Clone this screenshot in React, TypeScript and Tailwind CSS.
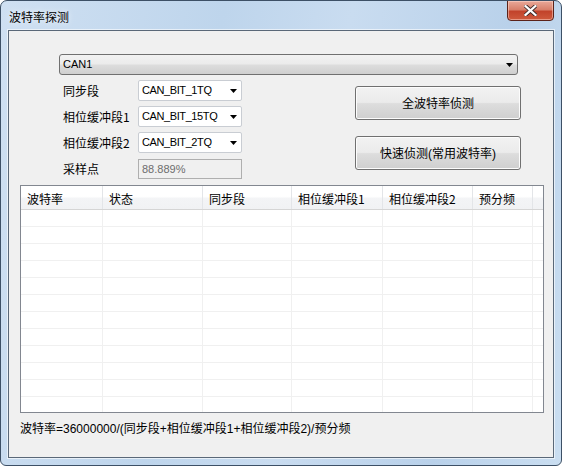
import React from "react";

// Win7 style "波特率探测" dialog
const COLS = [
  { label: "波特率", w: "w-[82px]" },
  { label: "状态", w: "w-[100px]" },
  { label: "同步段", w: "w-[89px]" },
  { label: "相位缓冲段1", w: "w-[91px]" },
  { label: "相位缓冲段2", w: "w-[90px]" },
  { label: "预分频", w: "w-[60px]" },
];

const ROWS = Array.from({ length: 12 }, (_, i) => i);

function Arrow() {
  return (
    <svg width="7" height="4" viewBox="0 0 7 4" className="shrink-0">
      <path d="M0 0 H7 L3.5 4 Z" fill="#000" />
    </svg>
  );
}

function SmallCombo({ value }: { value: string }) {
  return (
    <div className="flex items-center h-[21px] w-[104px] bg-white border border-[#c9cdd3] rounded-[2px] pl-[3px] pr-[4px]">
      <span className="flex-1 text-[11px] tracking-[-0.4px] text-black font-['Liberation_Sans',sans-serif]">{value}</span>
      <Arrow />
    </div>
  );
}

function WinButton({ children }: { children: React.ReactNode }) {
  return (
    <button
      type="button"
      className="h-[34px] w-[166px] rounded-[3px] border border-[#707070] bg-[linear-gradient(to_bottom,#f2f2f2_0%,#ebebeb_48%,#dddddd_52%,#cfcfcf_100%)] shadow-[inset_0_0_0_1px_#fcfcfc] text-[12px] text-black flex items-center justify-center pt-[1px]"
    >
      {children}
    </button>
  );
}

export default function App() {
  return (
    <div className="w-[562px] h-[466px] font-['Liberation_Sans','Noto_Sans_CJK_SC',sans-serif] text-[12px] text-black bg-white">
      <div className="relative flex flex-col w-full h-full rounded-t-[7px] rounded-b-[6px] border border-[#3d5066] bg-[linear-gradient(100deg,#cfe0f2_0%,#bed5ec_35%,#c9dcf0_55%,#b9d1ea_80%,#cadef1_100%)] overflow-hidden">
        {/* title bar */}
        <div className="relative flex items-start h-[29px] shrink-0">
          <span className="ml-[8px] mt-[8px] leading-[16px] text-[12px] text-black font-['Noto_Sans_CJK_SC',sans-serif] [text-shadow:0_0_6px_rgba(255,255,255,0.9)]">
            波特率探测
          </span>
          <div className="ml-auto mr-[7px] mt-[-1px] w-[47px] h-[21px] rounded-b-[4px] border border-[#5b2219] bg-[linear-gradient(to_bottom,#e9a999_0%,#d8806b_45%,#c2432b_55%,#cf5a3d_100%)] shadow-[inset_0_0_0_1px_rgba(255,220,210,0.5)] flex items-center justify-center">
            <svg width="13" height="11" viewBox="0 0 13 11">
              <path
                d="M1.5 1 L11.5 10 M11.5 1 L1.5 10"
                stroke="#3b2a2a"
                strokeWidth="4"
                strokeLinecap="square"
              />
              <path
                d="M1.5 1 L11.5 10 M11.5 1 L1.5 10"
                stroke="#ffffff"
                strokeWidth="2.2"
                strokeLinecap="square"
              />
            </svg>
          </div>
        </div>

        {/* client area */}
        <div className="flex-1 mx-[7px] mb-[7px] border border-[#5a6878] shadow-[0_0_0_1px_rgba(255,255,255,0.6)] bg-[#f0f0f0] flex flex-col">
          {/* CAN combo */}
          <div className="mt-[23px] ml-[50px] w-[459px] h-[21px] rounded-[3px] border border-[#707070] bg-[linear-gradient(to_bottom,#f2f2f2_0%,#ebebeb_48%,#dddddd_52%,#cfcfcf_100%)] flex items-center pl-[3px] pr-[4px]">
            <span className="flex-1 text-[11px] font-['Liberation_Sans',sans-serif]">CAN1</span>
            <Arrow />
          </div>

          <div className="flex mt-[5px] ml-[54px]">
            <div className="grid grid-cols-[75px_104px] gap-y-[5px] items-center">
              <span className="font-['Noto_Sans_CJK_SC',sans-serif] leading-[16px]">同步段</span>
              <SmallCombo value="CAN_BIT_1TQ" />
              <span className="font-['Noto_Sans_CJK_SC',sans-serif] leading-[16px]">相位缓冲段1</span>
              <SmallCombo value="CAN_BIT_15TQ" />
              <span className="font-['Noto_Sans_CJK_SC',sans-serif] leading-[16px]">相位缓冲段2</span>
              <SmallCombo value="CAN_BIT_2TQ" />
              <span className="font-['Noto_Sans_CJK_SC',sans-serif] leading-[16px] mt-[1px]">采样点</span>
              <div className="mt-[1px] h-[20px] w-[104px] border border-[#afafaf] bg-[#f0f0f0] pl-[3px] flex items-center text-[11px] text-[#6d6d6d] font-['Liberation_Sans',sans-serif]">
                88.889%
              </div>
            </div>
            <div className="ml-[113px] mt-[6px] flex flex-col gap-[16px]">
              <WinButton>全波特率侦测</WinButton>
              <WinButton>快速侦测(常用波特率)</WinButton>
            </div>
          </div>

          {/* list view */}
          <div className="mt-[6px] ml-[11px] w-[524px] h-[228px] border border-[#828790] bg-white flex flex-col overflow-hidden">
            <div className="flex h-[24px] shrink-0 border-b border-[#d5d5d5] bg-[linear-gradient(to_bottom,#ffffff_0%,#ffffff_45%,#f3f4f6_55%,#f1f2f4_100%)]">
              {COLS.map((c) => (
                <div
                  key={c.label}
                  className={`${c.w} shrink-0 border-r border-[#e3e5e8] pl-[6px] pt-[5px] leading-[16px] font-['Noto_Sans_CJK_SC',sans-serif]`}
                >
                  {c.label}
                </div>
              ))}
              <div className="flex-1" />
            </div>
            {ROWS.map((r) => (
              <div key={r} className="flex h-[17px] shrink-0 border-b border-[#f0f0f0]">
                {COLS.map((c) => (
                  <div key={c.label} className={`${c.w} shrink-0 border-r border-[#f0f0f0]`} />
                ))}
                <div className="flex-1" />
              </div>
            ))}
          </div>

          <div className="mt-[8px] ml-[11px] leading-[16px] font-['Liberation_Sans','Noto_Sans_CJK_SC',sans-serif]">
            波特率=36000000/(同步段+相位缓冲段1+相位缓冲段2)/预分频
          </div>
        </div>
      </div>
    </div>
  );
}
